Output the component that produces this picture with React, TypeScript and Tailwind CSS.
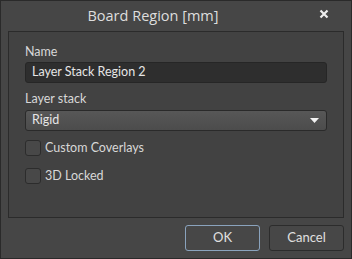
const font = { fontFamily: 'Lato, "Open Sans", sans-serif' };

function Checkbox({ label }: { label: string }) {
  return (
    <div className="flex items-center gap-[4px]">
      <div className="h-[16px] w-[16px] rounded-[3px] border border-[#2c2c2c] bg-[#484848]" />
      <span className="text-[12.5px] leading-[16px] text-[#d8d8d8]">{label}</span>
    </div>
  );
}

export default function App() {
  return (
    <div
      className="flex h-[259px] w-[352px] flex-col border border-[#2a2a2a] bg-[#464646]"
      style={font}
    >
      {/* title bar */}
      <div className="relative flex h-[30px] shrink-0 items-center justify-center pr-[46px]">
        <span className="font-['Open_Sans',sans-serif] text-[14.5px] leading-[20px] text-[#dedede]">
          Board Region [mm]
        </span>
        <svg
          className="absolute right-[22px] top-[8px]"
          width="10"
          height="10"
          viewBox="0 0 10 10"
        >
          <path d="M1.5 1.5 L8.5 8.5 M8.5 1.5 L1.5 8.5" stroke="#eeeeee" strokeWidth="2.2" />
        </svg>
      </div>

      {/* content panel */}
      <div className="mx-[7px] flex h-[187px] shrink-0 flex-col border border-[#2b2b2b] bg-[#424242] px-[16px] pt-[12px]">
        <span className="text-[12.5px] leading-[16px] text-[#d8d8d8]">Name</span>
        <div className="mt-[2px] flex h-[21px] items-center rounded-[3px] border border-[#262626] bg-[#2e2e2e] px-[6px] text-[12.5px] text-[#e6e6e6]">
          Layer Stack Region 2
        </div>
        <span className="mt-[8px] text-[12.5px] leading-[16px] text-[#d8d8d8]">Layer stack</span>
        <div className="mt-[3px] flex h-[21px] items-center justify-between rounded-[3px] border border-[#2a2a2a] bg-gradient-to-b from-[#575757] to-[#4c4c4c] px-[6px] text-[12.5px] text-[#e6e6e6]">
          <span>Rigid</span>
          <svg width="9" height="5" viewBox="0 0 9 5" className="mr-[1px]">
            <path d="M0 0 H9 L4.5 5 Z" fill="#f2f2f2" />
          </svg>
        </div>
        <div className="mt-[9px] flex flex-col gap-[12px]">
          <Checkbox label="Custom Coverlays" />
          <Checkbox label="3D Locked" />
        </div>
      </div>

      {/* buttons */}
      <div className="flex justify-end gap-[9px] pr-[7px] pt-[7px]">
        <button className="h-[26px] w-[75px] rounded-[3px] border border-[#8aa3bd] bg-[#474747] text-[13px] text-[#e0e0e0]">
          OK
        </button>
        <button className="h-[26px] w-[75px] rounded-[3px] border border-[#2c2c2c] bg-[#474747] text-[13px] text-[#e0e0e0]">
          Cancel
        </button>
      </div>
    </div>
  );
}
